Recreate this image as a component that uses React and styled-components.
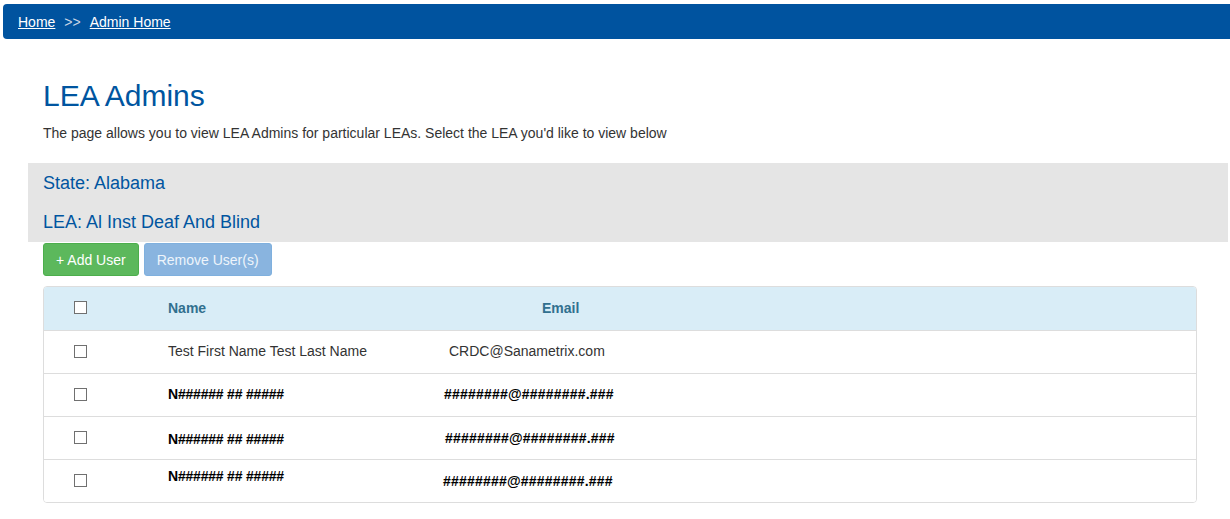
import React from "react";
import styled, { createGlobalStyle } from "styled-components";

const Global = createGlobalStyle`
  body {
    margin: 0;
    background: #fff;
    font-family: "Liberation Sans", Arial, sans-serif;
    color: #333;
  }
`;

const Crumbs = styled.div`
  margin: 4px 0 0 3px;
  height: 35px;
  background: #00539f;
  border-radius: 4px 0 0 4px;
  display: flex;
  align-items: center;
  padding-left: 15px;
  font-size: 14px;
  color: #c9d6e6;
`;

const CrumbLink = styled.a`
  color: #fff;
  text-decoration: underline;
`;

const Sep = styled.span`
  margin: 0 9px;
`;

const Page = styled.div`
  padding: 0 2px 0 28px;
`;

const Intro = styled.div`
  padding-left: 15px;
`;

const Title = styled.h1`
  margin: 38px 0 0;
  font-size: 30px;
  font-weight: normal;
  color: #0055a0;
  line-height: 38px;
`;

const Lead = styled.p`
  margin: 9px 0 0;
  font-size: 14px;
  line-height: 18px;
`;

const Band = styled.div`
  margin-top: 21px;
  background: #e5e5e5;
  padding: 10px 15px 0;
  height: 69px;
`;

const BandLine = styled.div`
  font-size: 18px;
  color: #0055a0;
  line-height: 20px;
  margin-bottom: ${(p) => (p.$first ? "19px" : "0")};
`;

const Body = styled.div`
  padding: 1px 31px 0 15px;
`;

const Actions = styled.div`
  display: flex;
  gap: 5px;
`;

const Btn = styled.button`
  height: 33px;
  padding: 0 12px;
  border-radius: 3px;
  border: 1px solid ${(p) => (p.$green ? "#4cae4c" : "#7fb0de")};
  background: ${(p) => (p.$green ? "#5cb85c" : "#89b4df")};
  color: ${(p) => (p.$green ? "#fff" : "#eef4fb")};
  font-family: inherit;
  font-size: 14px;
`;

const Table = styled.div`
  margin-top: 10px;
  border: 1px solid #ddd;
  border-radius: 4px;
  overflow: hidden;
`;

const Row = styled.div`
  display: grid;
  grid-template-columns: 124px 1fr;
  align-items: center;
  height: 43px;
  padding-bottom: 2px;
  background: ${(p) => (p.$head ? "#d9edf7" : "#fff")};
  border-top: ${(p) => (p.$head ? "none" : "1px solid #ddd")};
  box-sizing: border-box;
`;

const Box = styled.span`
  display: block;
  width: 11px;
  height: 11px;
  border: 1px solid #707070;
  margin-left: 30px;
  background: #fff;
`;

const Cell = styled.span`
  position: relative;
  font-size: 14px;
  color: #333;
  white-space: nowrap;
`;

const HeadCell = styled(Cell)`
  font-weight: bold;
  color: #31708f;
`;

const Masked = styled(Cell)`
  font-size: 14px;
  font-weight: bold;
  color: #000;
  letter-spacing: ${(p) => (p.$wide ? "0.2px" : "-0.2px")};
  top: ${(p) => p.$dy || 0}px;
`;

const Cols = styled.div`
  display: flex;
`;

const Col = styled.div`
  width: ${(p) => p.$w}px;
  flex: none;
`;

const masked = [
  { dy: 0, nameW: 276, emailDy: 0 },
  { dy: 2, nameW: 277, emailDy: 1 },
  { dy: -4, nameW: 275, emailDy: 1 },
];

export default function App() {
  return (
    <>
      <Global />
      <Crumbs>
        <CrumbLink href="#">Home</CrumbLink>
        <Sep>&gt;&gt;</Sep>
        <CrumbLink href="#">Admin Home</CrumbLink>
      </Crumbs>
      <Page>
        <Intro>
          <Title>LEA Admins</Title>
          <Lead>
            The page allows you to view LEA Admins for particular LEAs. Select
            the LEA you'd like to view below
          </Lead>
        </Intro>
        <Band>
          <BandLine $first>State: Alabama</BandLine>
          <BandLine>LEA: Al Inst Deaf And Blind</BandLine>
        </Band>
        <Body>
          <Actions>
            <Btn $green>+ Add User</Btn>
            <Btn>Remove User(s)</Btn>
          </Actions>
          <Table>
            <Row $head>
              <Box />
              <Cols>
                <Col $w={374}>
                  <HeadCell>Name</HeadCell>
                </Col>
                <Col $w={200}>
                  <HeadCell>Email</HeadCell>
                </Col>
              </Cols>
            </Row>
            <Row>
              <Box />
              <Cols>
                <Col $w={281}>
                  <Cell>Test First Name Test Last Name</Cell>
                </Col>
                <Col $w={200}>
                  <Cell>CRDC@Sanametrix.com</Cell>
                </Col>
              </Cols>
            </Row>
            {masked.map((r, i) => (
              <Row key={i}>
                <Box />
                <Cols>
                  <Col $w={r.nameW}>
                    <Masked $dy={r.dy}>N###### ## #####</Masked>
                  </Col>
                  <Col $w={200}>
                    <Masked $wide $dy={r.emailDy}>
                      ########@########.###
                    </Masked>
                  </Col>
                </Cols>
              </Row>
            ))}
          </Table>
        </Body>
      </Page>
    </>
  );
}
